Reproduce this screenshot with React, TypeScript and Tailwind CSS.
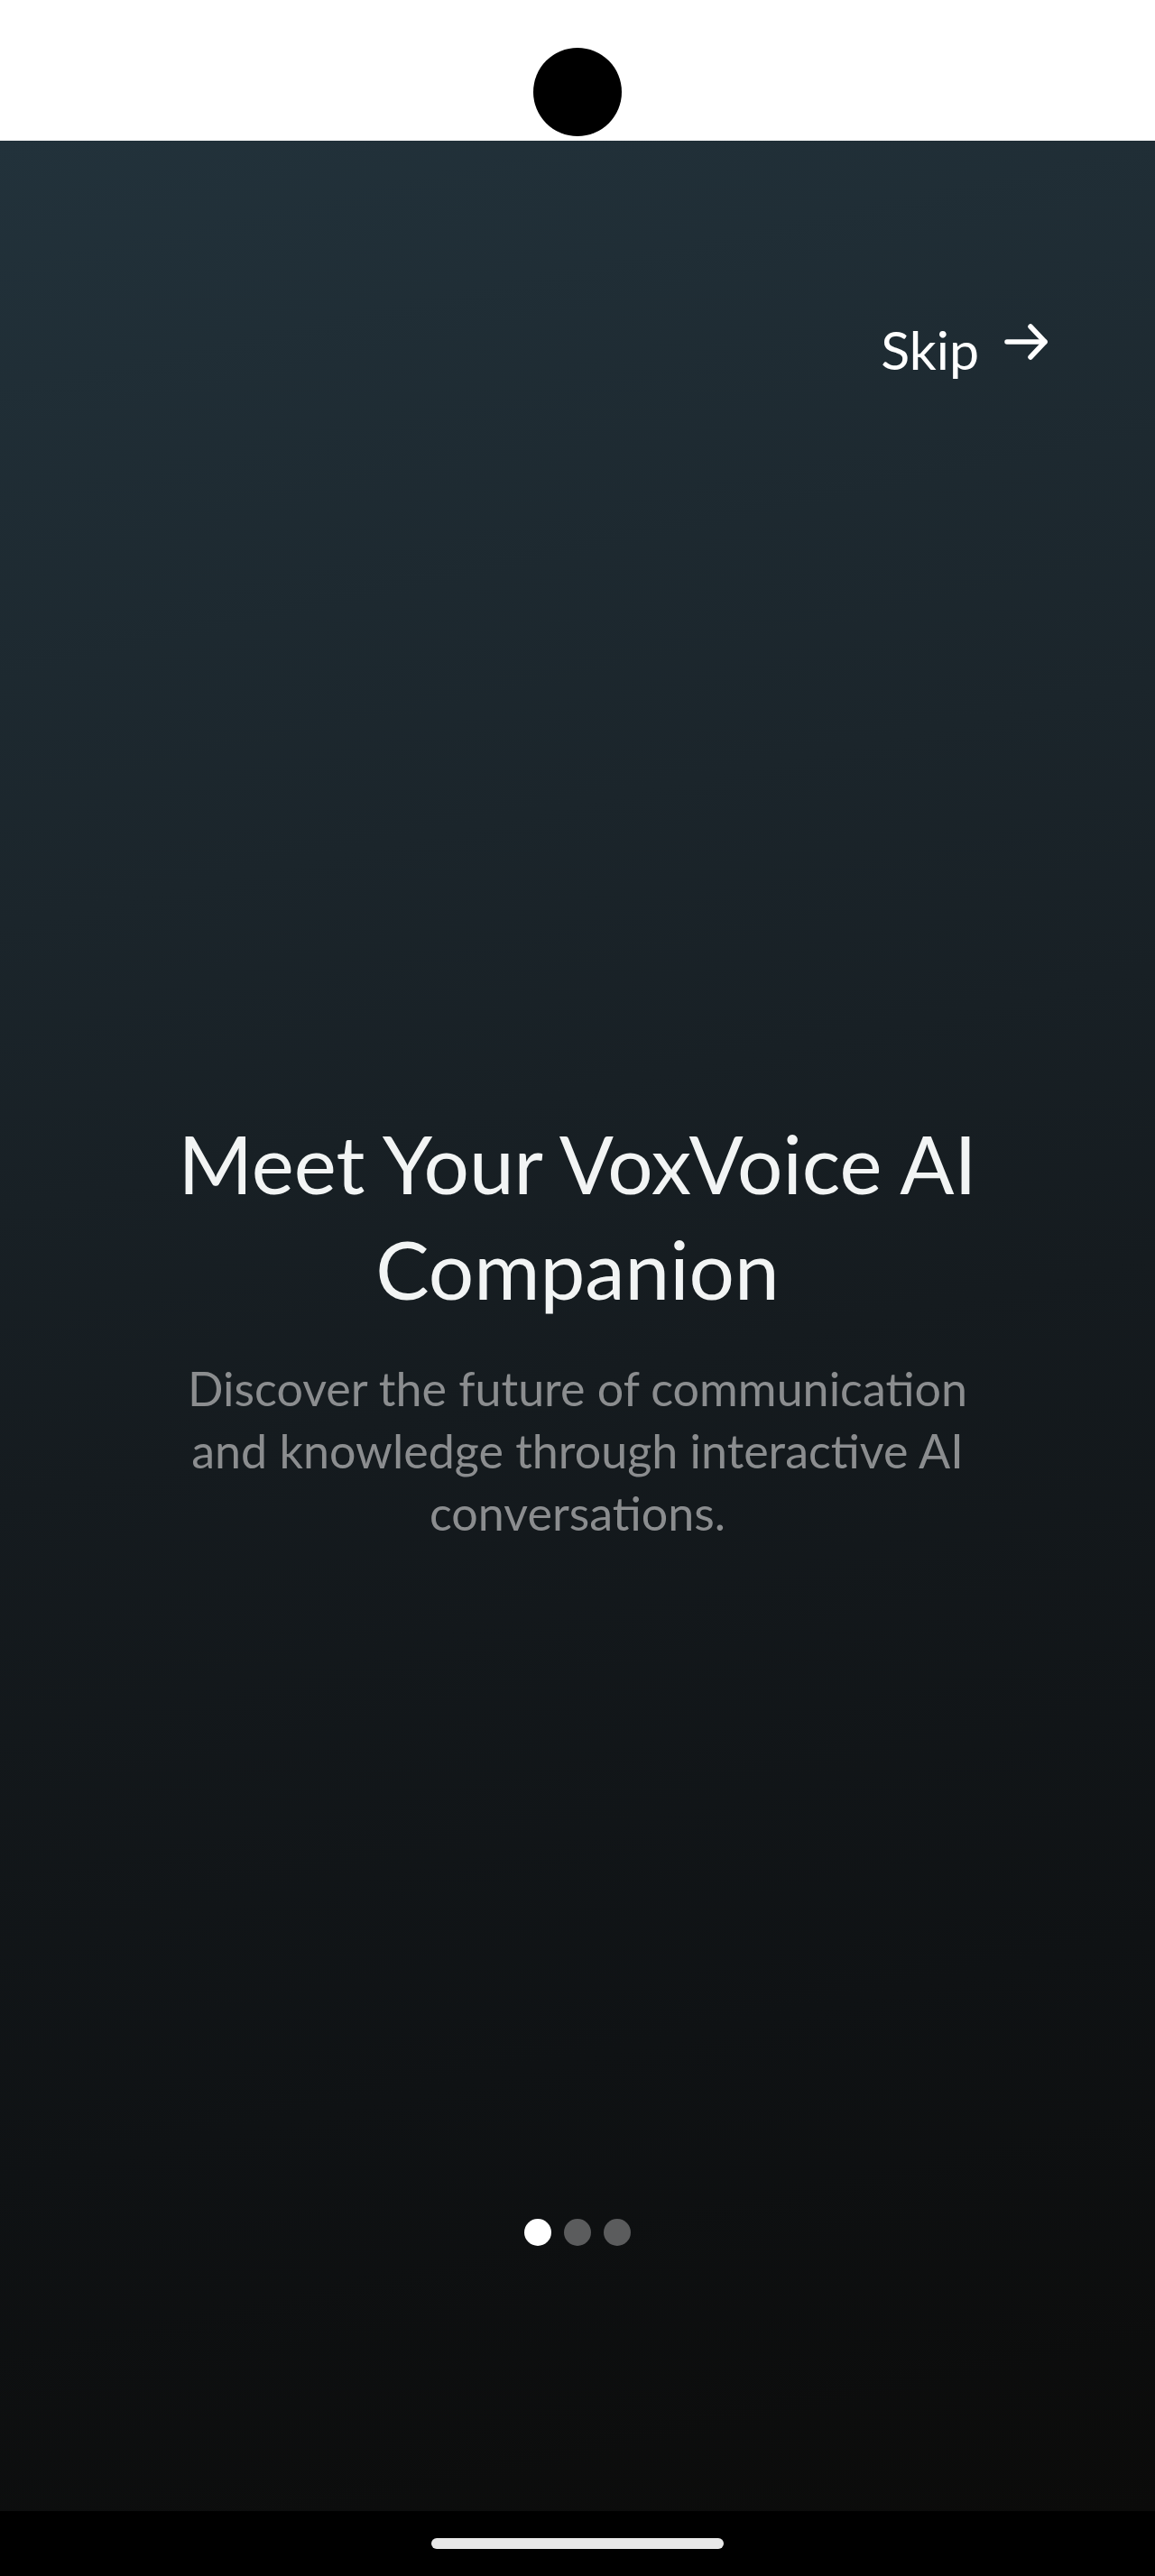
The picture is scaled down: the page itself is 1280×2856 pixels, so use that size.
import React from 'react';

const slides = [0, 1, 2];

const ArrowIcon = () => (
  <svg width="52" height="46" viewBox="0 0 52 46" fill="none" stroke="currentColor" strokeWidth="5.5" strokeLinecap="round" strokeLinejoin="round">
    <path d="M4 22H46" />
    <path d="M30 5L46 22L30 39" />
  </svg>
);

export default function App() {
  const active = 0;

  return (
    <div className="flex flex-col h-[2856px] w-full font-['Lato','Segoe_UI',sans-serif]">
      {/* status area with camera cutout */}
      <div className="h-[156px] bg-white flex justify-center pt-[53px] shrink-0">
        <div className="w-[98px] h-[98px] rounded-full bg-black" />
      </div>

      <div className="flex-1 flex flex-col bg-[linear-gradient(168deg,#22323b_0%,#1b252b_30%,#151b1f_52%,#0f1214_78%,#0b0b0a_100%)]">
        <div className="flex justify-end pr-[116px] pt-[202px]">
          <button className="flex items-start gap-[27px] text-white">
            <span className="text-[59px] leading-none">Skip</span>
            <span className="-mt-[1px]">
              <ArrowIcon />
            </span>
          </button>
        </div>

        <div className="mt-[814px] w-[920px] mx-auto text-center">
          <h1 className="text-[89px] leading-[117px] text-[#f2f4f4] font-normal">
            Meet Your VoxVoice AI Companion
          </h1>
          <p className="mt-[40px] text-[52px] leading-[69px] text-[#8b8d8f]">
            Discover the future of communication and knowledge through interactive AI conversations.
          </p>
        </div>

        <div className="flex-1" />

        <div className="flex justify-center gap-[14px] pb-[294px]">
          {slides.map((i) => (
            <div
              key={i}
              className={`w-[30px] h-[30px] rounded-full ${i === active ? 'bg-white' : 'bg-[#5b5c5d]'}`}
            />
          ))}
        </div>
      </div>

      {/* nav bar */}
      <div className="h-[72px] bg-black flex justify-center pt-[30px] shrink-0">
        <div className="w-[324px] h-[12px] rounded-full bg-[#e8e8e8]" />
      </div>
    </div>
  );
}
